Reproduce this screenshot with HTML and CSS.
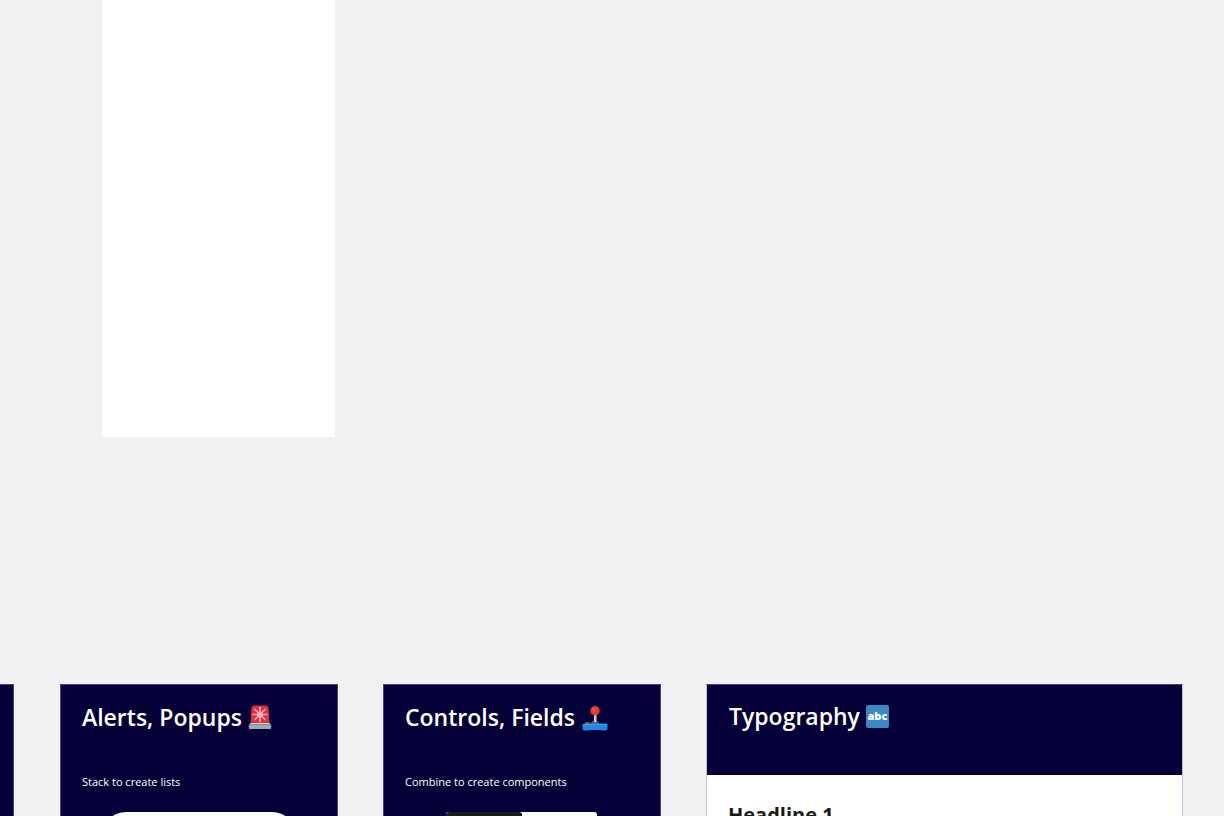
FILE: index.html
```html
<!DOCTYPE html>
<html lang="en">
<head>
<meta charset="utf-8">
<meta name="viewport" content="width=device-width, initial-scale=1">
<title>Component boards</title>
<link rel="stylesheet" href="styles.css">
</head>
<body>
<main class="canvas">
  <div class="blank-frame"></div>
  <div class="boards">
    <section class="board board-edge"></section>

    <section class="board board-dark">
      <h2 class="board-title">Alerts, Popups
        <svg class="emoji" viewBox="0 0 24 24" aria-hidden="true">
          <path d="M2.500 19 3.500 3Q3.700 .5 6 .5H18Q20.300 .5 20.500 3L21.500 19Z" fill="#dd2e44"/>
          <g stroke="#f4abba" stroke-width="1.700" stroke-linecap="round"><path d="M12 2.500V16.500M5 9.500H19M7 4.500 17 14.500M17 4.500 7 14.500"/></g>
          <circle cx="12" cy="9.500" r="3" fill="#f4abba"/>
          <path d="M3 18H21Q22 18 22.500 19.500H1.500Q2 18 3 18Z" fill="#ccd6dd"/>
          <path d="M.8 19.500H23.200V23Q23.200 24 22 24H2Q.8 24 .8 23Z" fill="#9aaab4"/>
        </svg>
      </h2>
      <p class="board-note">Stack to create lists</p>
      <div class="popup"></div>
    </section>

    <section class="board board-dark">
      <h2 class="board-title">Controls, Fields
        <svg class="emoji emoji-wide" viewBox="0 0 26 24" aria-hidden="true">
          <rect x="4" y="17" width="5" height="4" rx="1.500" fill="#d32f2f"/>
          <path d="M10 19Q10 15.500 14 15.500T18 19V20H10Z" fill="#565b60"/>
          <rect x="13" y="9" width="2.500" height="8" fill="#c8ced4"/>
          <circle cx="14" cy="5.800" r="4.700" fill="#e53935"/>
          <circle cx="12.800" cy="4.600" r="2" fill="#f44d43"/>
          <path d="M3 18.500H25Q26.500 18.500 26.500 20V23.500Q26.500 25.500 24 25.500H21L19.500 25H8.500L7 25.500H4Q1.500 25.500 1.500 23.500V20Q1.500 18.500 3 18.500Z" fill="#1e88e5"/>
          <path d="M2 19.500H26" stroke="#3ba0f2"/>
        </svg>
      </h2>
      <p class="board-note">Combine to create components</p>
      <div class="segments"><span class="segment segment-on"></span><span class="segment"></span></div>
    </section>

    <section class="board board-light">
      <header class="board-head">
        <h2 class="board-title">Typography
          <span class="abc-badge">abc</span>
        </h2>
      </header>
      <h3 class="headline">Headline 1</h3>
    </section>
  </div>
</main>
</body>
</html>
```

FILE: styles.css
```css
* { box-sizing: border-box; }

body {
  margin: 0;
  background: #f1f1f1;
  font-family: "Open Sans", sans-serif;
}

.canvas {
  height: 100vh;
  overflow: hidden;
}

.blank-frame {
  width: 19%;
  height: 437px;
  margin: 0 0 247px 102px;
  background: #fff;
}

.boards {
  display: grid;
  grid-template-columns: 15px 278fr 278fr 477fr;
  column-gap: 45px;
  padding-right: 41px;
}

.board {
  min-height: 200px;
  border: 1px solid #4a4770;
}

.board-edge {
  margin-right: 1px;
  border-left: 0;
  background: #050038;
}

.board-dark {
  padding: 16px 21px;
  background: #050038;
  color: #fff;
}

.board-light {
  border-color: #4a4770 #c4c1dc;
  background: #fff;
}

.board-head {
  height: 90px;
  padding: 15px 22px;
  background: #050038;
  color: #fff;
}

.board-title {
  display: flex;
  align-items: center;
  gap: 6px;
  margin: 0;
  font-size: 23px;
  font-weight: 600;
  line-height: 32px;
  white-space: nowrap;
}

.board-note {
  margin: 41px 0 0;
  font-size: 11px;
  line-height: 16px;
}

.emoji {
  width: 24px;
  height: 24px;
}

.emoji-wide {
  width: 26px;
  overflow: visible;
}

.abc-badge {
  width: 23px;
  height: 23px;
  border-radius: 2px;
  background: #3b88c3;
  font-size: 11px;
  font-weight: 800;
  line-height: 21px;
  text-align: center;
}

.popup {
  height: 64px;
  margin: 22px 20px 0;
  border-radius: 24px;
  background: #fff;
}

.segments {
  display: flex;
  height: 32px;
  margin: 22px 42px 0 41px;
  overflow: hidden;
  border-radius: 3px;
  background: #fff;
}

.segment { flex: 1; }

.segment-on {
  border-radius: 3px;
  background: #1a1a1a;
}

.headline {
  margin: 26px 21px;
  color: #1a1a1a;
  font-size: 20px;
  font-weight: 700;
  line-height: 28px;
}
```
